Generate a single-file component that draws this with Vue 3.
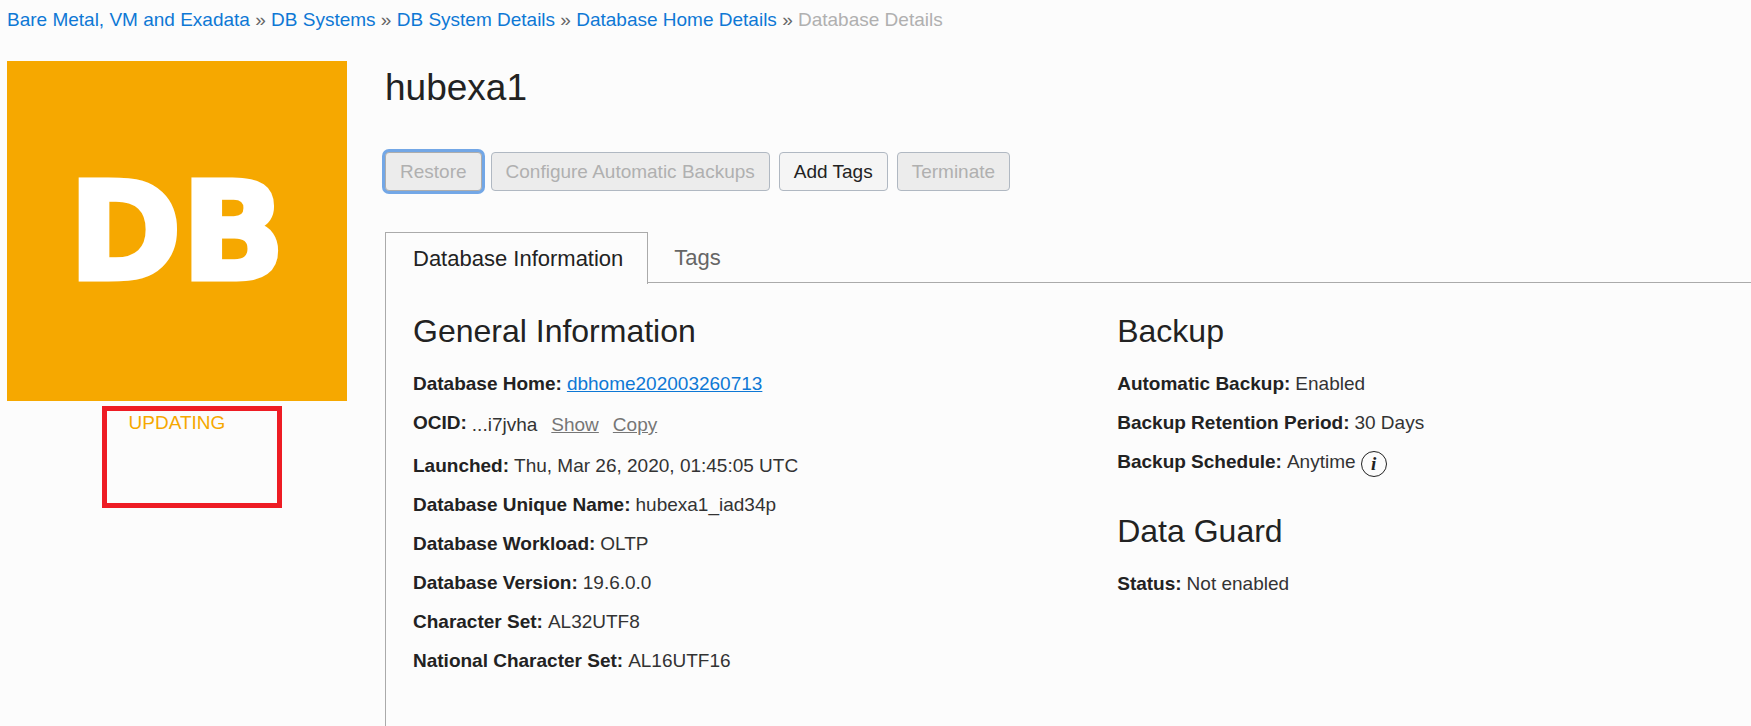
<script setup>
const crumbs = [
  'Bare Metal, VM and Exadata',
  'DB Systems',
  'DB System Details',
  'Database Home Details',
]

const actions = [
  { label: 'Restore', disabled: true, focused: true },
  { label: 'Configure Automatic Backups', disabled: true },
  { label: 'Add Tags', disabled: false },
  { label: 'Terminate', disabled: true },
]

const details = [
  { label: 'Launched:', value: 'Thu, Mar 26, 2020, 01:45:05 UTC' },
  { label: 'Database Unique Name:', value: 'hubexa1_iad34p' },
  { label: 'Database Workload:', value: 'OLTP' },
  { label: 'Database Version:', value: '19.6.0.0' },
  { label: 'Character Set:', value: 'AL32UTF8' },
  { label: 'National Character Set:', value: 'AL16UTF16' },
]
</script>

<template>
  <div class="page">
    <nav class="breadcrumb" aria-label="Breadcrumb">
      <template v-for="crumb in crumbs" :key="crumb">
        <a href="#">{{ crumb }}</a><span class="sep"> » </span>
      </template>
      <span class="current" aria-current="page">Database Details</span>
    </nav>

    <div class="body">
      <aside class="side">
        <div class="tile">DB</div>
        <div class="status">
          UPDATING
          <span class="marker" aria-hidden="true"></span>
        </div>
      </aside>

      <main class="main">
        <h1>hubexa1</h1>

        <div class="actions">
          <button
            v-for="action in actions"
            :key="action.label"
            type="button"
            class="btn"
            :class="{ focused: action.focused }"
            :disabled="action.disabled"
          >{{ action.label }}</button>
        </div>

        <div class="tabs" role="tablist">
          <button id="tab-info" type="button" role="tab" class="tab active" aria-selected="true" aria-controls="panel-info">Database Information</button>
          <button type="button" role="tab" class="tab" aria-selected="false">Tags</button>
        </div>

        <div id="panel-info" class="panel" role="tabpanel" aria-labelledby="tab-info">
          <section>
            <h2>General Information</h2>
            <dl>
              <div class="row">
                <dt>Database Home:</dt>
                <dd><a class="home-link" href="#">dbhome202003260713</a></dd>
              </div>
              <div class="row ocid">
                <dt>OCID:</dt>
                <dd>...i7jvha<a href="#">Show</a><a href="#">Copy</a></dd>
              </div>
              <div v-for="item in details" :key="item.label" class="row">
                <dt>{{ item.label }}</dt>
                <dd>{{ item.value }}</dd>
              </div>
            </dl>
          </section>

          <div class="column">
            <section>
              <h2>Backup</h2>
              <dl>
                <div class="row">
                  <dt>Automatic Backup:</dt>
                  <dd>Enabled</dd>
                </div>
                <div class="row">
                  <dt>Backup Retention Period:</dt>
                  <dd>30 Days</dd>
                </div>
                <div class="row">
                  <dt>Backup Schedule:</dt>
                  <dd>Anytime</dd>
                  <dd class="info-cell"><button type="button" class="info" aria-label="About the backup schedule">i</button></dd>
                </div>
              </dl>
            </section>
            <section>
              <h2>Data Guard</h2>
              <dl>
                <div class="row">
                  <dt>Status:</dt>
                  <dd>Not enabled</dd>
                </div>
              </dl>
            </section>
          </div>
        </div>
      </main>
    </div>
  </div>
</template>

<style>
body {
  margin: 0;
  background: #fcfcfc;
}
</style>

<style scoped>
.page {
  box-sizing: border-box;
  display: flex;
  flex-direction: column;
  min-height: 100vh;
  padding: 8px 0 0 7px;
  color: #222;
  font-family: "Liberation Sans", Arial, sans-serif;
  font-size: 19px;
  line-height: 24px;
}

a {
  color: #0e78d5;
  text-decoration: none;
}

button {
  font-family: inherit;
}

.sep {
  color: #666;
}

.current {
  color: #b0b0b0;
}

.body {
  flex: 1;
  display: flex;
  gap: 38px;
  padding-top: 29px;
}

.side {
  flex: none;
  width: 340px;
}

.tile {
  height: 340px;
  background: #f6a800;
  color: #fff;
  font-family: "DejaVu Sans", Verdana, sans-serif;
  font-size: 136px;
  font-weight: 700;
  line-height: 342px;
  text-align: center;
  -webkit-text-stroke: 5px #fff;
}

.status {
  position: relative;
  padding-top: 10px;
  color: #f6a800;
  text-align: center;
}

/* Highlight frame laid over the lifecycle state */
.marker {
  position: absolute;
  top: 5px;
  left: 95px;
  box-sizing: border-box;
  width: 180px;
  height: 102px;
  border: 5px solid #ee1c24;
}

.main {
  flex: 1;
  min-width: 0;
  display: flex;
  flex-direction: column;
}

h1 {
  margin: 0;
  font-size: 37px;
  font-weight: 400;
  line-height: 53px;
}

.actions {
  display: flex;
  gap: 9px;
  margin-top: 38px;
}

.btn {
  box-sizing: border-box;
  height: 39px;
  padding: 0 14px;
  border: 1px solid #b0b8c2;
  border-radius: 4px;
  background: #f5f5f5;
  color: #222;
  font-size: 19px;
}

.btn:disabled {
  background: #ececec;
  color: #b0b0b0;
}

.btn.focused {
  border-color: #adadad;
  box-shadow: 0 0 0 3px #73a7e6;
}

.tabs {
  display: flex;
  margin-top: 41px;
  box-shadow: inset 0 -1px #aaa;
}

.tab {
  padding: 0 26px;
  border: 0;
  background: none;
  color: #666;
  font-size: 22px;
  line-height: 50px;
}

.tab.active {
  margin-bottom: -1px;
  padding: 1px 24px 0 27px;
  border: solid #aaa;
  border-width: 1px 1px 0;
  background: #fcfcfc;
  color: #222;
}

.panel {
  flex: 1;
  display: grid;
  grid-template-columns: 10fr 9fr;
  padding: 28px 0 0 27px;
  border-left: 1px solid #aaa;
}

.column {
  display: flex;
  flex-direction: column;
  gap: 30px;
}

h2 {
  margin: 0 0 13px;
  font-size: 32px;
  font-weight: 400;
  line-height: 40px;
}

dl {
  margin: 0;
}

.row {
  display: flex;
  gap: 5px;
  line-height: 39px;
}

dt {
  font-weight: 700;
}

dd {
  margin: 0;
  color: #333;
}

.home-link {
  text-decoration: underline;
}

.ocid dd {
  display: flex;
  gap: 14px;
  line-height: 43px;
}

.ocid a {
  color: #767676;
  text-decoration: underline;
}

.info-cell {
  display: flex;
  align-items: flex-end;
}

.info {
  box-sizing: border-box;
  width: 26px;
  height: 26px;
  margin-bottom: 4px;
  padding: 0;
  border: 1px solid #222;
  border-radius: 50%;
  background: none;
  color: #222;
  font-family: "Liberation Serif", "Times New Roman", serif;
  font-size: 19px;
  font-style: italic;
  font-weight: 700;
  line-height: 22px;
}
</style>
